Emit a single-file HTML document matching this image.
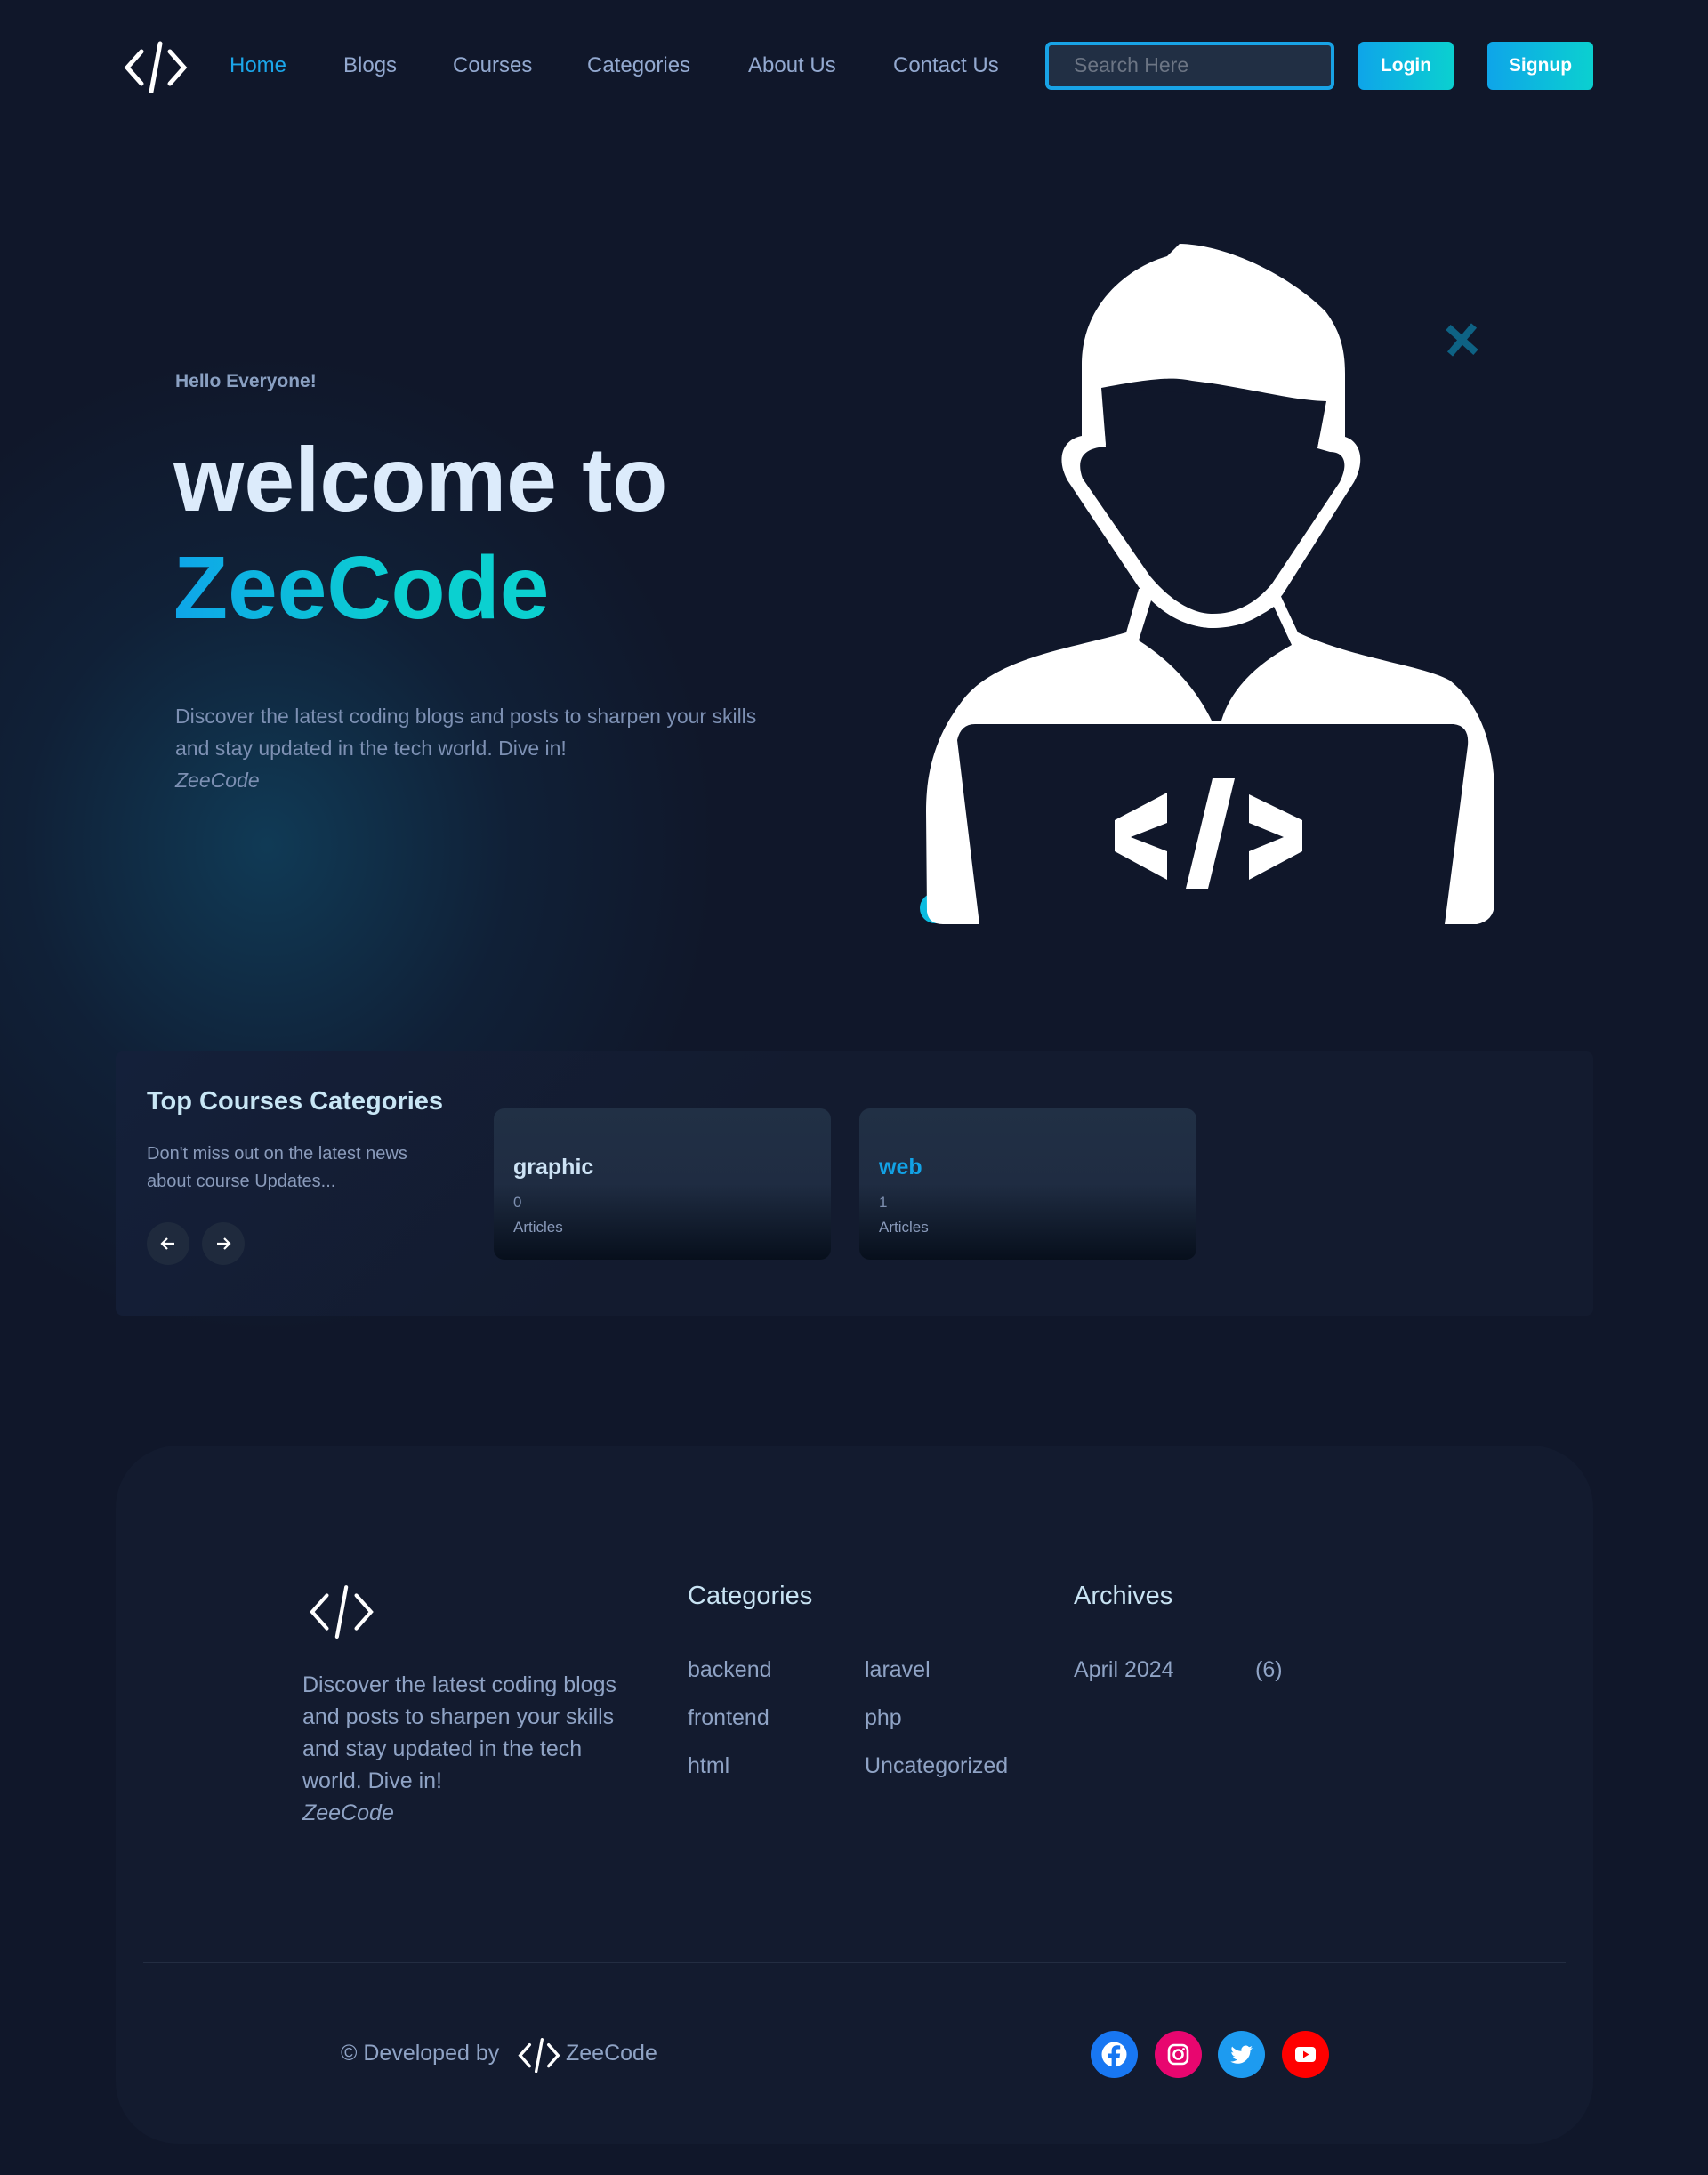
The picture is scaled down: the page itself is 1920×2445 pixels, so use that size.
<!DOCTYPE html>
<html><head><meta charset="utf-8">
<style>
*{margin:0;padding:0;box-sizing:border-box}
html,body{width:1920px;height:2445px;background:#10172a;font-family:"Liberation Sans","DejaVu Sans",sans-serif;overflow:hidden}
.a{position:absolute;white-space:nowrap}
.glow{position:absolute;left:-250px;top:350px;width:1100px;height:1200px;background:radial-gradient(ellipse at 50% 50%,rgba(16,70,100,0.75) 0%,rgba(16,50,80,0.35) 35%,rgba(16,23,42,0) 65%)}
.nav{font-size:24px;color:#93a9d0}
.grad{background:linear-gradient(90deg,#0ea5e9,#0bd0d0);}
.btn{position:absolute;border-radius:6px;color:#fff;font-weight:bold;font-size:21px;text-align:center}
.card{position:absolute;top:1246px;width:379px;height:170px;border-radius:12px;background:linear-gradient(180deg,#213045 0%,#1f2c42 50%,#070f1c 100%)}
.card .t{position:absolute;left:22px;top:52px;font-size:25px;font-weight:bold}
.card .n{position:absolute;left:22px;top:96px;font-size:17px;color:#7d8fb0}
.card .l{position:absolute;left:22px;top:124px;font-size:17px;color:#8a9bbb}
.circ{position:absolute;width:48px;height:48px;border-radius:50%;background:#1f2a3d;top:1374px}
.fl{font-size:25px;color:#8fa3c5}
.soc{position:absolute;top:2283px;width:53px;height:53px;border-radius:50%}
</style></head><body>
<div class="glow"></div>

<svg class="a" style="left:137px;top:45px" width="76" height="60" viewBox="0 0 76 60"><g stroke="#fff" stroke-width="5" fill="none" stroke-linecap="round"><path d="M22 13 L6 31 L22 49"/><path d="M54 13 L70 31 L54 49"/><path d="M43 4 L33 58"/></g></svg>
<div class="a nav" style="left:258px;top:60px;color:#1ba6ea">Home</div>
<div class="a nav" style="left:386px;top:60px">Blogs</div>
<div class="a nav" style="left:509px;top:60px">Courses</div>
<div class="a nav" style="left:660px;top:60px">Categories</div>
<div class="a nav" style="left:841px;top:60px">About Us</div>
<div class="a nav" style="left:1004px;top:60px">Contact Us</div>
<div class="a" style="left:1175px;top:47px;width:325px;height:54px;border:4px solid #18a3e6;border-radius:7px;background:#212f44"></div>
<div class="a" style="left:1207px;top:60px;font-size:23px;color:#6c7584">Search Here</div>
<div class="btn grad" style="left:1527px;top:47px;width:107px;height:54px;line-height:54px">Login</div>
<div class="btn grad" style="left:1672px;top:47px;width:119px;height:54px;line-height:54px">Signup</div>

<div class="a" style="left:197px;top:417px;font-size:21px;font-weight:bold;color:#8aa0c2">Hello Everyone!</div>
<div class="a" style="left:195px;top:482px;font-size:102px;font-weight:bold;color:#dcebfb;line-height:115px">welcome to</div>
<div class="a" style="left:195px;top:604px;font-size:100px;font-weight:bold;line-height:115px;background:linear-gradient(90deg,#0ea5e9,#0bd0d0 60%);-webkit-background-clip:text;background-clip:text;color:transparent">ZeeCode</div>
<div class="a" style="left:197px;top:787px;font-size:23px;color:#7d90b3;line-height:36px">Discover the latest coding blogs and posts to sharpen your skills<br>and stay updated in the tech world. Dive in!<br><i>ZeeCode</i></div>

<div class="a" style="left:1034px;top:1004px;width:34px;height:34px;border-radius:50%;background:#0bbbe0"></div>
<svg class="a" style="left:1000px;top:250px" width="720" height="830" viewBox="0 0 720 830">
<path fill="#fff" d="M266,461 C200,480 115,490 80,540 C50,580 41,620 41,662 L42,775 Q44,789 60,789 L101,789 L76,582 Q80,564 96,564 L634,564 Q652,566 650,588 L624,789 L660,789 Q680,785 680,765 L680,635 C678,580 661,540 630,515 C600,498 520,490 459,461 L436,412 L280,412 Z"/>
<path fill="#10172a" d="M294,425 L280,470 Q335,505 362,560 L373,560 Q388,510 452,475 L432,432 Q400,455 363,456 Q325,455 294,425Z"/>
<path fill="#fff" d="M216,240 C192,245 188,268 200,290 L280,410 C310,444 340,456 363,456 C395,456 422,444 442,418 L522,292 C536,266 528,246 512,241 Z"/>
<path fill="#10172a" d="M238,186 L243,252 C215,254 210,268 217,288 L293,398 C320,430 345,440 363,440 C390,440 412,428 430,406 L506,292 C516,272 512,258 495,258 L481,254 L491,201 Z"/>
<path fill="#fff" d="M216,242 L216,160 C216,90 270,50 312,38 L326,24 C380,25 450,60 490,100 C505,120 512,140 512,170 L512,241 L481,254 L491,201 C450,200 400,185 340,178 C320,174 300,174 238,186 L243,250 Z"/>
<path fill="#fff" d="M253,672 L312,641 L312,675 L271,691 L312,707 L312,739 L253,707Z M363,625 L388,625 L358,749 L333,749Z M464,672 L404,643 L404,675 L443,691 L404,707 L404,739 L464,707Z"/>
<path stroke="#0e6284" stroke-width="8" d="M628,118 L659,146 M657,116 L630,148"/>
</svg>

<div class="a" style="left:130px;top:1182px;width:1661px;height:297px;border-radius:8px;background:linear-gradient(135deg,#14203a 0%,#131b2f 40%)"></div>
<div class="a" style="left:165px;top:1222px;font-size:29px;font-weight:bold;color:#c8e6f5">Top Courses Categories</div>
<div class="a" style="left:165px;top:1282px;font-size:20px;color:#8a9bbb;line-height:31px">Don't miss out on the latest news<br>about course Updates...</div>
<div class="circ" style="left:165px"></div><div class="circ" style="left:227px"></div>
<svg class="a" style="left:178px;top:1387px" width="22" height="22" viewBox="0 0 22 22"><path d="M18 11H4M10 5L4 11L10 17" stroke="#fff" stroke-width="2.2" fill="none"/></svg>
<svg class="a" style="left:240px;top:1387px" width="22" height="22" viewBox="0 0 22 22"><path d="M4 11H18M12 5L18 11L12 17" stroke="#fff" stroke-width="2.2" fill="none"/></svg>
<div class="card" style="left:555px"><div class="t" style="color:#cde3f5">graphic</div><div class="n">0</div><div class="l">Articles</div></div>
<div class="card" style="left:966px"><div class="t" style="color:#12a2e6">web</div><div class="n">1</div><div class="l">Articles</div></div>

<div class="a" style="left:130px;top:1625px;width:1661px;height:785px;border-radius:70px;background:#131b2f"></div>
<svg class="a" style="left:344px;top:1780px" width="80" height="62" viewBox="0 0 76 60"><g stroke="#fff" stroke-width="4" fill="none" stroke-linecap="round"><path d="M22 13 L6 31 L22 49"/><path d="M54 13 L70 31 L54 49"/><path d="M43 4 L33 58"/></g></svg>
<div class="a fl" style="left:340px;top:1876px;line-height:36px;white-space:normal;width:380px">Discover the latest coding blogs and posts to sharpen your skills and stay updated in the tech world. Dive in!<br><i>ZeeCode</i></div>
<div class="a" style="left:773px;top:1778px;font-size:29px;color:#c8e3f3">Categories</div>
<div class="a" style="left:1207px;top:1778px;font-size:29px;color:#c8e3f3">Archives</div>
<div class="a fl" style="left:773px;top:1863px">backend</div>
<div class="a fl" style="left:773px;top:1917px">frontend</div>
<div class="a fl" style="left:773px;top:1971px">html</div>
<div class="a fl" style="left:972px;top:1863px">laravel</div>
<div class="a fl" style="left:972px;top:1917px">php</div>
<div class="a fl" style="left:972px;top:1971px">Uncategorized</div>
<div class="a fl" style="left:1207px;top:1863px">April 2024</div>
<div class="a fl" style="left:1411px;top:1863px">(6)</div>
<div class="a" style="left:161px;top:2206px;width:1599px;height:1px;background:#232d42"></div>
<div class="a fl" style="left:383px;top:2294px">© Developed by</div>
<svg class="a" style="left:580px;top:2290px" width="52" height="40" viewBox="0 0 76 60"><g stroke="#fff" stroke-width="5" fill="none" stroke-linecap="round"><path d="M22 13 L6 31 L22 49"/><path d="M54 13 L70 31 L54 49"/><path d="M43 4 L33 58"/></g></svg>
<div class="a fl" style="left:636px;top:2294px">ZeeCode</div>
<div class="soc" style="left:1226px;background:#1877f2"><svg width="53" height="53" viewBox="0 0 53 53"><circle cx="26.5" cy="26.5" r="14" fill="#fff"/><path d="M28.5 41V30h4l.6-4.5h-4.6v-2.8c0-1.3.4-2.2 2.2-2.2h2.5v-4c-.4-.1-1.9-.2-3.6-.2-3.6 0-6 2.2-6 6.2v3h-4V30h4v11z" fill="#1877f2"/></svg></div>
<div class="soc" style="left:1298px;background:#e8066f"><svg width="53" height="53" viewBox="0 0 53 53"><rect x="16" y="16" width="21" height="21" rx="6" fill="none" stroke="#fff" stroke-width="2.6"/><circle cx="26.5" cy="26.5" r="5" fill="none" stroke="#fff" stroke-width="2.6"/><circle cx="32.5" cy="20.5" r="1.4" fill="#fff"/></svg></div>
<div class="soc" style="left:1369px;background:#1d9bf0"><svg width="53" height="53" viewBox="0 0 53 53"><path d="M39 19c-.9.4-1.9.7-2.9.8 1-.6 1.8-1.6 2.2-2.8-1 .6-2 1-3.2 1.2a5 5 0 0 0-8.6 4.6c-4.2-.2-7.9-2.2-10.4-5.2-1.4 2.3-.6 5.2 1.5 6.7-.8 0-1.6-.2-2.3-.6 0 2.5 1.8 4.6 4.1 5-.7.2-1.5.2-2.3.1.6 2 2.5 3.5 4.7 3.5-2.1 1.7-4.8 2.5-7.5 2.2 2.3 1.4 5 2.3 7.8 2.3 9.4 0 14.7-8 14.4-15.2 1-.7 1.8-1.6 2.5-2.6z" fill="#fff"/></svg></div>
<div class="soc" style="left:1441px;background:#ff0000"><svg width="53" height="53" viewBox="0 0 53 53"><rect x="15" y="18" width="23" height="17" rx="4" fill="#fff"/><path d="M24 22.5v8l6.5-4z" fill="#ff0000"/></svg></div>
</body></html>
